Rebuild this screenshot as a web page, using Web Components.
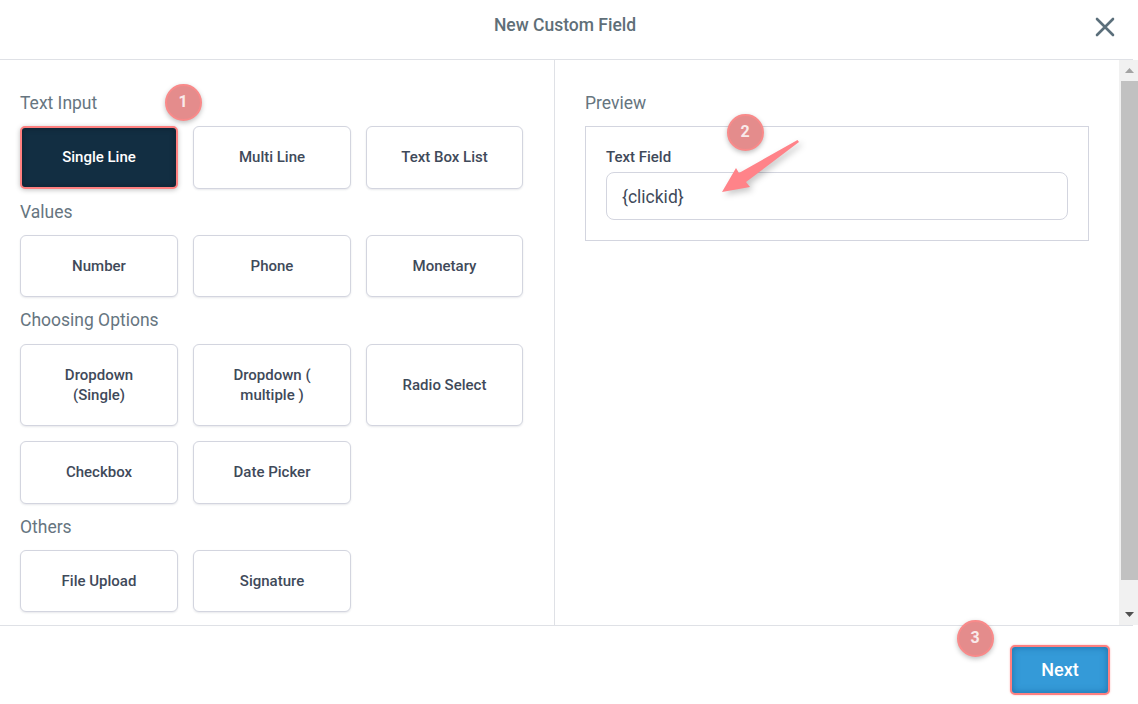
<!DOCTYPE html>
<html>
<head>
<meta charset="utf-8">
<title>New Custom Field</title>
<style>
  html, body { margin: 0; padding: 0; height: 100%; background: #fff; }
  body { font-family: Roboto, "Liberation Sans", sans-serif; overflow: hidden; }
</style>
</head>
<body>
<field-dialog>
  <dialog-header slot="header">New Custom Field</dialog-header>

  <type-section slot="types" label="Text Input" first>
    <type-button selected>Single Line</type-button>
    <type-button>Multi Line</type-button>
    <type-button>Text Box List</type-button>
  </type-section>
  <type-section slot="types" label="Values">
    <type-button>Number</type-button>
    <type-button>Phone</type-button>
    <type-button>Monetary</type-button>
  </type-section>
  <type-section slot="types" label="Choosing Options">
    <type-button tall>Dropdown<br>(Single)</type-button>
    <type-button tall>Dropdown (<br>multiple )</type-button>
    <type-button tall>Radio Select</type-button>
    <type-button>Checkbox</type-button>
    <type-button>Date Picker</type-button>
  </type-section>
  <type-section slot="types" label="Others">
    <type-button>File Upload</type-button>
    <type-button>Signature</type-button>
  </type-section>

  <field-preview slot="preview" label="Text Field" value="{clickid}"></field-preview>

  <next-button slot="footer">Next</next-button>

  <step-badge slot="overlay" style="left:165px;top:84px">1</step-badge>
  <step-badge slot="overlay" style="left:727px;top:114px">2</step-badge>
  <step-badge slot="overlay" style="left:957px;top:620px">3</step-badge>
  <callout-arrow slot="overlay"></callout-arrow>
</field-dialog>

<script>
class FieldDialog extends HTMLElement {
    connectedCallback() {
        this.attachShadow({ mode: 'open' });
        this.shadowRoot.innerHTML = `
            <style>
                :host {
                    display: flex;
                    flex-direction: column;
                    position: relative;
                    height: 704px;
                    width: 1138px;
                    overflow: hidden;
                    background: #fff;
                }
                .body {
                    display: flex;
                    height: 565px;
                    flex: none;
                }
                .left {
                    box-sizing: border-box;
                    width: 555px;
                    flex: none;
                    padding: 31.4px 0 0 20px;
                    border-right: 1px solid #dfe1e6;
                }
                .right {
                    flex: 1;
                    padding: 31px 30px 0 30px;
                }
                .foot {
                    flex: 1;
                    position: relative;
                    display: flex;
                    justify-content: flex-end;
                    align-items: flex-start;
                    padding: 20px 28px 0 0;
                }
                /* the rule stops short of the window edge */
                .foot::before {
                    content: "";
                    position: absolute;
                    left: 0;
                    top: 0;
                    right: 5px;
                    height: 1px;
                    background: #dfe1e6;
                }
            </style>
            <slot name="header"></slot>
            <div class="body">
                <div class="left"><slot name="types"></slot></div>
                <div class="right"><slot name="preview"></slot></div>
                <page-scrollbar></page-scrollbar>
            </div>
            <div class="foot"><slot name="footer"></slot></div>
            <slot name="overlay"></slot>
        `;
    }
}

class DialogHeader extends HTMLElement {
    connectedCallback() {
        this.attachShadow({ mode: 'open' });
        this.shadowRoot.innerHTML = `
            <style>
                :host {
                    display: flex;
                    flex: none;
                    position: relative;
                    box-sizing: border-box;
                    height: 60px;
                    padding: 0 8px 11px 0;
                    align-items: center;
                    justify-content: center;
                    font-size: 17.5px;
                    font-weight: 500;
                    color: #5f6f78;
                }
                :host::after {
                    content: "";
                    position: absolute;
                    left: 0;
                    right: 5px;
                    bottom: 0;
                    height: 1px;
                    background: #dfe1e6;
                }
                svg {
                    position: absolute;
                    left: 1095px;
                    top: 17px;
                }
            </style>
            <slot></slot>
            <svg width="20" height="20" viewBox="0 0 20 20" fill="none" stroke="#5b6f7b" stroke-width="2.6" stroke-linecap="round">
                <path d="M2 2 L18 18 M18 2 L2 18"/>
            </svg>
        `;
    }
}

class TypeSection extends HTMLElement {
    connectedCallback() {
        this.attachShadow({ mode: 'open' });
        this.shadowRoot.innerHTML = `
            <style>
                :host { display: block; }
                .label {
                    height: 24px;
                    line-height: 24px;
                    font-size: 17.5px;
                    color: #66757f;
                    margin: 0 0 11px;
                }
                :host(:not([first])) .label { margin: 11px 0 11.4px; }
                .grid {
                    display: grid;
                    grid-template-columns: 158px 158px 157px;
                    column-gap: 15px;
                    row-gap: 15px;
                    width: 503px;
                }
            </style>
            <div class="label">${this.getAttribute('label')}</div>
            <div class="grid"><slot></slot></div>
        `;
    }
}

class TypeButton extends HTMLElement {
    connectedCallback() {
        this.attachShadow({ mode: 'open' });
        this.shadowRoot.innerHTML = `
            <style>
                :host {
                    display: flex;
                    box-sizing: border-box;
                    height: 62.2px;
                    padding: 0 16px;
                    align-items: center;
                    justify-content: center;
                    text-align: center;
                    font-size: 15px;
                    font-weight: 500;
                    line-height: 20px;
                    color: #3f4a5a;
                    background: #fff;
                    border: 1px solid #d3d5df;
                    border-radius: 6px;
                    box-shadow: 0 1px 2px rgba(60, 66, 87, 0.12);
                }
                :host([tall]) { height: 82.8px; }
                :host([selected]) {
                    color: #fff;
                    background: #122e42;
                    border: 2px solid #ff8080;
                    border-radius: 5px;
                    box-shadow: 0 1px 5px rgba(0, 0, 0, 0.25), inset 0 0 6px rgba(0, 0, 0, 0.3);
                }
            </style>
            <slot></slot>
        `;
    }
}

class FieldPreview extends HTMLElement {
    connectedCallback() {
        this.attachShadow({ mode: 'open' });
        this.shadowRoot.innerHTML = `
            <style>
                :host { display: block; }
                .title {
                    height: 24px;
                    line-height: 24px;
                    font-size: 17.5px;
                    color: #66757f;
                    margin-bottom: 11px;
                }
                .box {
                    box-sizing: border-box;
                    width: 504px;
                    height: 115px;
                    padding: 20px;
                    border: 1px solid #d3d5df;
                }
                .field-label {
                    height: 20px;
                    line-height: 20px;
                    font-size: 15px;
                    font-weight: 500;
                    color: #3f4a5a;
                    margin-bottom: 5px;
                }
                .input {
                    box-sizing: border-box;
                    height: 48px;
                    line-height: 48px;
                    padding: 0 15px;
                    font-size: 17.5px;
                    color: #3f4a5a;
                    border: 1px solid #d3d5df;
                    border-radius: 8px;
                }
            </style>
            <div class="title">Preview</div>
            <div class="box">
                <div class="field-label">${this.getAttribute('label')}</div>
                <div class="input">${this.getAttribute('value')}</div>
            </div>
        `;
    }
}

class PageScrollbar extends HTMLElement {
    connectedCallback() {
        this.attachShadow({ mode: 'open' });
        this.shadowRoot.innerHTML = `
            <style>
                :host {
                    display: flex;
                    flex-direction: column;
                    flex: none;
                    box-sizing: border-box;
                    width: 19px;
                    padding-left: 2px;
                    background: #f1f1f1;
                }
                .arrow { height: 21px; display: flex; align-items: center; justify-content: center; flex: none; }
                .thumb { height: 499px; flex: none; background: #c1c1c1; }
                .gap { flex: 1; }
            </style>
            <div class="arrow"><svg width="9" height="5" viewBox="0 0 9 5"><path d="M4.5 0 L9 5 L0 5 Z" fill="#a3a3a3"/></svg></div>
            <div class="thumb"></div>
            <div class="gap"></div>
            <div class="arrow"><svg width="9" height="5" viewBox="0 0 9 5"><path d="M0 0 L9 0 L4.5 5 Z" fill="#505050"/></svg></div>
        `;
    }
}

class NextButton extends HTMLElement {
    connectedCallback() {
        this.attachShadow({ mode: 'open' });
        this.shadowRoot.innerHTML = `
            <style>
                :host {
                    display: flex;
                    box-sizing: border-box;
                    width: 100px;
                    height: 50px;
                    padding-bottom: 2px;
                    align-items: center;
                    justify-content: center;
                    font-size: 18px;
                    font-weight: 500;
                    color: #fff;
                    background: #349ad8;
                    border: 2px solid #ff8080;
                    border-radius: 5px;
                    box-shadow: inset 0 0 7px rgba(10, 70, 120, 0.5), 0 0 2px rgba(255, 128, 128, 0.6);
                }
            </style>
            <slot></slot>
        `;
    }
}

class StepBadge extends HTMLElement {
    connectedCallback() {
        this.attachShadow({ mode: 'open' });
        this.shadowRoot.innerHTML = `
            <style>
                :host {
                    display: flex;
                    position: absolute;
                    box-sizing: border-box;
                    width: 37px;
                    height: 37px;
                    padding: 0 1px 3px 0;
                    align-items: center;
                    justify-content: center;
                    font-size: 16px;
                    font-weight: 700;
                    color: #f9eaea;
                    background: #e48c8c;
                    border: 2px solid #f98a8a;
                    border-radius: 50%;
                    box-shadow: 0 2px 5px rgba(0, 0, 0, 0.25);
                }
            </style>
            <slot></slot>
        `;
    }
}

class CalloutArrow extends HTMLElement {
    connectedCallback() {
        this.attachShadow({ mode: 'open' });
        this.shadowRoot.innerHTML = `
            <style>
                :host { position: absolute; left: 715px; top: 135px; display: block; }
                svg { display: block; overflow: visible; filter: drop-shadow(3px 3px 3px rgba(0, 0, 0, 0.22)); }
            </style>
            <svg width="90" height="65" viewBox="715 135 90 65">
                <polygon fill="#ff8389" points="722,192 736,168 739,173 797.5,140 799,142 746,182 750,187"/>
            </svg>
        `;
    }
}

customElements.define('field-dialog', FieldDialog);
customElements.define('dialog-header', DialogHeader);
customElements.define('type-section', TypeSection);
customElements.define('type-button', TypeButton);
customElements.define('field-preview', FieldPreview);
customElements.define('page-scrollbar', PageScrollbar);
customElements.define('next-button', NextButton);
customElements.define('step-badge', StepBadge);
customElements.define('callout-arrow', CalloutArrow);
</script>
</body>
</html>
